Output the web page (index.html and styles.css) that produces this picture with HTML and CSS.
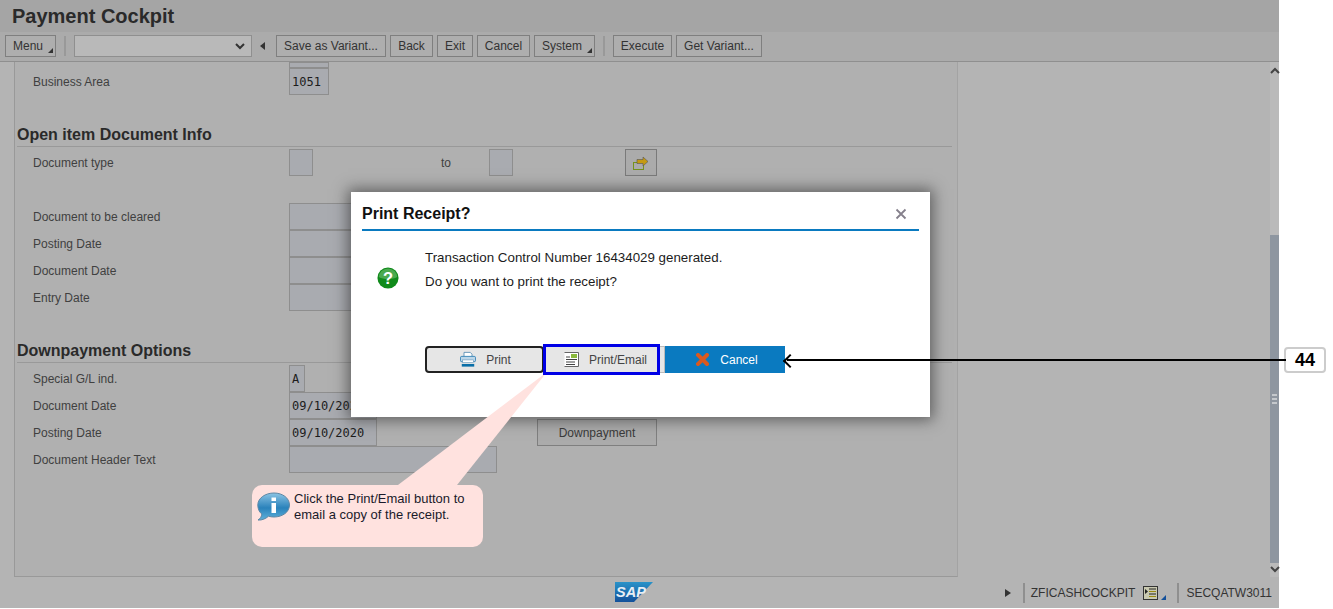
FILE: index.html
```html
<!DOCTYPE html>
<html lang="en">
<head>
	<meta charset="UTF-8">
	<title>Payment Cockpit</title>
	<link rel="stylesheet" href="styles.css">
</head>
<body>
	<div class="app">
		<div class="title_bar">Payment Cockpit</div>
		<div class="toolbar">
			<button type="button" class="tb_btn tb_menu">Menu</button>
			<span class="tb_sep"></span>
			<div class="tb_select">
				<svg width="10" height="7" viewBox="0 0 10 7"><path d="M1 1l4 4 4-4" fill="none" stroke="#333" stroke-width="2"/></svg>
			</div>
			<span class="tb_back"></span>
			<button type="button" class="tb_btn tb_save">Save as Variant...</button>
			<button type="button" class="tb_btn tb_b">Back</button>
			<button type="button" class="tb_btn tb_exit">Exit</button>
			<button type="button" class="tb_btn tb_cancel">Cancel</button>
			<button type="button" class="tb_btn tb_menu tb_system">System</button>
			<span class="tb_sep"></span>
			<button type="button" class="tb_btn tb_exec">Execute</button>
			<button type="button" class="tb_btn tb_get">Get Variant...</button>
		</div>

		<div class="content">
			<div class="panel">
				<div class="row row_sliver"><span class="lbl"></span><span class="field f40"></span></div>
				<div class="row"><span class="lbl">Business Area</span><span class="field f40">1051</span></div>

				<h2 class="section">Open item Document Info</h2>
				<div class="row">
					<span class="lbl">Document type</span>
					<span class="field f24"></span>
					<span class="to">to</span>
					<span class="field f24"></span>
					<button type="button" class="multi_btn">
						<svg width="18" height="16" viewBox="0 0 18 16"><rect x="1.5" y="7.5" width="10" height="7" fill="none" stroke="#76921c"/><path d="M5 4.500h6V2l5 4.500-5 4.500V8.500H5z" fill="#c59a12" stroke="#555" stroke-width=".6"/></svg>
					</button>
				</div>

				<div class="group">
					<div class="row"><span class="lbl">Document to be cleared</span><span class="field f88"></span></div>
					<div class="row"><span class="lbl">Posting Date</span><span class="field f88"></span></div>
					<div class="row"><span class="lbl">Document Date</span><span class="field f88"></span></div>
					<div class="row"><span class="lbl">Entry Date</span><span class="field f88"></span></div>
				</div>

				<h2 class="section">Downpayment Options</h2>
				<div class="row"><span class="lbl">Special G/L ind.</span><span class="field f16">A</span></div>
				<div class="row"><span class="lbl">Document Date</span><span class="field f88">09/10/2020</span></div>
				<div class="row">
					<span class="lbl">Posting Date</span><span class="field f88">09/10/2020</span>
					<button type="button" class="down_btn">Downpayment</button>
				</div>
				<div class="row"><span class="lbl">Document Header Text</span><span class="field f208"></span></div>
			</div>
			<div class="side"></div>
			<div class="scrollbar">
				<svg class="sb_arrow" width="10" height="7" viewBox="0 0 10 7"><path d="M1 6l4-4 4 4" fill="none" stroke="#444" stroke-width="2"/></svg>
				<div class="sb_track"></div>
				<div class="sb_thumb"><span class="grip"></span></div>
				<svg class="sb_arrow" width="10" height="7" viewBox="0 0 10 7"><path d="M1 1l4 4 4-4" fill="none" stroke="#444" stroke-width="2"/></svg>
			</div>
		</div>

		<div class="footer">
			<svg class="sap" width="38" height="20" viewBox="0 0 38 20">
				<defs><linearGradient id="sapg" x1="0" y1="0" x2="0" y2="1"><stop offset="0" stop-color="#2a93c9"/><stop offset="1" stop-color="#13509a"/></linearGradient></defs>
				<path d="M0 0h38L19 20H0z" fill="url(#sapg)"/>
				<text x="1" y="15" class="sap_text">SAP</text>
			</svg>
			<div class="status">
				<span class="play"></span>
				<span class="st_sep"></span>
				<span class="st_text">ZFICASHCOCKPIT</span>
				<svg class="st_icon" width="16" height="15" viewBox="0 0 16 15"><rect x=".5" y=".5" width="14" height="13" fill="#c9c9b0" stroke="#333"/><path d="M6 3h7M6 8h7" stroke="#222"/><path d="M6 5.500h7M6 10.500h7" stroke="#9a8a10"/><path d="M2 3l3 2.500L2 8z" fill="#222"/></svg>
				<span class="st_tri"></span>
				<span class="st_sep st_sep2"></span>
				<span class="st_text">SECQATW3011</span>
			</div>
		</div>
	</div>

	<!-- dialog and tutorial callouts sit on top of the page -->
	<div class="dialog">
		<div class="dlg_head">
			<span class="dlg_title">Print Receipt?</span>
			<svg width="12" height="12" viewBox="0 0 12 12"><path d="M1.500 1.500l9 9M10.500 1.500l-9 9" stroke="#85808c" stroke-width="1.800"/></svg>
		</div>
		<div class="dlg_body">
			<svg class="dlg_icon" width="22" height="22" viewBox="0 0 24 24">
				<circle cx="12" cy="12" r="11.500" fill="#0f8a1a"/>
				<path d="M2 11a10 9.500 0 0 1 20 0c-5 3-15 3-20 0z" fill="#4aa94f"/>
				<text x="12" y="18" class="q_mark">?</text>
			</svg>
			<div class="dlg_text">
				<p>Transaction Control Number 16434029 generated.</p>
				<p>Do you want to print the receipt?</p>
			</div>
		</div>
		<div class="dlg_btns">
			<button type="button" class="d_btn d_print">
				<svg width="16" height="17" viewBox="0 0 18 17"><path d="M4.500 5V.5h7l2 2V5" fill="#fff" stroke="#5b8fb5"/><rect x=".5" y="5" width="17" height="6" rx="1.500" fill="#bcd6e8" stroke="#2f7fb5"/><rect x="3" y="9" width="12" height="3" fill="#fff" stroke="#5b8fb5" stroke-width=".6"/><rect x="2" y="13.500" width="14" height="3" fill="#0a6fa8"/></svg>
				Print
			</button>
			<button type="button" class="d_btn d_email">
				<svg width="15" height="15" viewBox="0 0 15 15"><path d="M.5.500h14v14H.5z" fill="#fff"/><path d="M.5.500h14v14H.5" fill="none" stroke="#666"/><rect x="7" y="2" width="6" height="4" fill="#8ab93c"/><path d="M2 5h4M2 7.500h11M2 10h9M2 12.500h9" stroke="#444"/></svg>
				Print/Email
			</button>
			<button type="button" class="d_btn d_cancel">
				<svg width="13" height="13" viewBox="0 0 13 13"><path d="M2 2l9 9M11 2l-9 9" stroke="#d9591f" stroke-width="4" stroke-linecap="square"/></svg>
				Cancel
			</button>
		</div>
	</div>

	<svg class="wedge" width="150" height="113" viewBox="0 0 150 113"><path d="M149 0L0 113h59z" fill="#ffe2df"/></svg>
	<span class="hilite"></span>

	<div class="callout">
		<svg class="info" width="33" height="30" viewBox="0 0 33 30">
			<defs><linearGradient id="infog" x1="0" y1="0" x2="0" y2="1"><stop offset="0" stop-color="#8cc4e4"/><stop offset=".55" stop-color="#2a82bb"/><stop offset="1" stop-color="#5fb0da"/></linearGradient></defs>
			<path d="M17 1c8.500 0 15.500 5 15.500 12S25.500 25 17 25c-2 0-4-.3-5.500-.8C9 26.500 5 28.500 1 28c2.500-1.500 3.500-3.500 3.800-6C2 19.800.8 16.500.8 13 .8 6 8.500 1 17 1z" fill="url(#infog)" stroke="#5d87a5"/>
			<rect x="14.500" y="11" width="4.500" height="10" fill="#fff"/>
			<rect x="14.500" y="5.500" width="4.500" height="3.500" fill="#fff"/>
		</svg>
		<p>Click the Print/Email button to email a copy of the receipt.</p>
	</div>

	<div class="pointer">
		<span class="badge">44</span>
	</div>
</body>
</html>
```

FILE: styles.css
```css
*{
	margin: 0;
	padding: 0;
	box-sizing: border-box;
	font-family: "Liberation Sans", Arial, sans-serif;
}
body{
	background-color: #fff;
	width: 1333px;
	height: 609px;
	overflow: hidden;
	position: relative;
}
button{
	font-family: "Liberation Sans", Arial, sans-serif;
}
.app{
	width: 1279px;
	height: 608px;
	display: flex;
	flex-direction: column;
	background-color: #b4b4b4;
}

/* header */
.title_bar{
	height: 32px;
	padding: 4px 0 0 12px;
	background-color: #a5a5a5;
	color: #2a2a2a;
	font-size: 20px;
	font-weight: bold;
	line-height: 24px;
}
.toolbar{
	height: 30px;
	padding: 3px 0 0 5px;
	display: flex;
	align-items: flex-start;
	gap: 4px;
	background-color: #ababab;
	border-bottom: 1px solid #8f8f8f;
}
.tb_btn{
	height: 22px;
	background-color: #aeaeae;
	border: 1px solid #7f7f7f;
	color: #333;
	font-size: 12px;
	text-align: center;
	position: relative;
}
.tb_menu{
	width: 51px;
	text-align: left;
	padding-left: 7px;
}
.tb_menu::after{
	content: "";
	position: absolute;
	right: 2px;
	bottom: 3px;
	border-left: 5px solid transparent;
	border-bottom: 5px solid #333;
}
.tb_sep{
	width: 2px;
	height: 20px;
	margin: 1px 4px 0 4px;
	background-color: #999;
}
.tb_select{
	width: 178px;
	height: 22px;
	padding: 0 6px 0 0;
	display: flex;
	align-items: center;
	justify-content: flex-end;
	background-color: #b9b9b9;
	border: 1px solid #8f8f8f;
}
.tb_back{
	width: 0;
	height: 0;
	margin: 7px 7px 0 4px;
	border-top: 4px solid transparent;
	border-bottom: 4px solid transparent;
	border-right: 5px solid #333;
}
.tb_save{ width: 110px; }
.tb_b{ width: 43px; }
.tb_exit{ width: 36px; }
.tb_cancel{ width: 53px; }
.tb_system{ width: 61px; }
.tb_exec{ width: 59px; }
.tb_get{ width: 86px; }

/* main area */
.content{
	height: 515px;
	padding-left: 14px;
	display: flex;
	align-items: stretch;
}
.panel{
	width: 944px;
	height: 515px;
	padding-left: 2px;
	background-color: #b0b0b0;
	border-left: 1px solid #999;
	border-right: 1px solid #a3a3a3;
	border-bottom: 1px solid #999;
}
.side{
	width: 312px;
}
.row{
	height: 27px;
	display: flex;
	align-items: stretch;
	font-size: 12px;
	color: #404040;
}
.row_sliver{
	height: 6px;
}
.lbl{
	width: 272px;
	padding-left: 16px;
	line-height: 29px;
}
.field{
	background-color: #a9abb0;
	border: 1px solid #8e8e8e;
	color: #1c1c1c;
	font-family: "DejaVu Sans Mono", monospace;
	font-size: 12px;
	line-height: 27px;
	padding-left: 2px;
}
.f16{ width: 16px; }
.f24{ width: 24px; }
.f40{ width: 40px; }
.f88{ width: 88px; }
.f208{ width: 208px; }
.to{
	width: 48px;
	margin-left: 128px;
	line-height: 29px;
}
.multi_btn{
	width: 32px;
	height: 27px;
	margin-left: 112px;
	background-color: #ababab;
	border: 1px solid #7a7a7a;
	display: flex;
	align-items: center;
	justify-content: center;
}
.down_btn{
	width: 120px;
	height: 27px;
	margin-left: 160px;
	background-color: #ababab;
	border: 1px solid #7f7f7f;
	color: #3a3a3a;
	font-size: 12px;
}
.section{
	height: 27px;
	margin: 25px 5px 2px 0;
	padding-top: 5px;
	color: #2a2a2a;
	font-size: 16px;
	line-height: 20px;
	border-bottom: 1px solid #999;
}
.group{
	margin-top: 27px;
}

/* scrollbar */
.scrollbar{
	width: 9px;
	display: flex;
	flex-direction: column;
	position: relative;
	background-color: #bababa;
}
.sb_arrow{
	flex: none;
	margin-top: 5px;
}
.sb_arrow:last-child{
	position: absolute;
	left: 0;
	bottom: 4px;
	margin: 0;
}
.sb_track{
	height: 161px;
}
.sb_thumb{
	height: 328px;
	display: flex;
	align-items: center;
	justify-content: center;
	background-color: #8e96a0;
}
.grip{
	width: 5px;
	height: 10px;
	background: repeating-linear-gradient(#c4c8cc 0 2px, transparent 2px 4px);
}

/* footer */
.footer{
	height: 31px;
	padding: 5px 7px 0 615px;
	display: flex;
	align-items: flex-start;
	justify-content: space-between;
}
.sap_text{
	fill: #e8eef4;
	font-size: 14.500px;
	font-weight: bold;
	font-style: italic;
}
.status{
	display: flex;
	align-items: center;
	height: 20px;
	margin-top: 1px;
	font-size: 12px;
	color: #333;
}
.play{
	width: 0;
	height: 0;
	margin-right: 12px;
	border-top: 4px solid transparent;
	border-bottom: 4px solid transparent;
	border-left: 6px solid #333;
}
.st_sep{
	width: 2px;
	height: 20px;
	margin-right: 6px;
	background-color: #8f8f8f;
}
.st_sep2{
	margin-left: 11px;
	margin-right: 7px;
}
.st_icon{
	margin-left: 8px;
}
.st_tri{
	margin: 9px 0 0 2px;
	border-left: 5px solid transparent;
	border-bottom: 5px solid #13509a;
}

/* dialog */
.dialog{
	position: absolute;
	left: 351px;
	top: 192px;
	width: 579px;
	height: 225px;
	padding: 0 11px;
	background-color: #fff;
	box-shadow: 0 0 14px 3px rgba(40, 40, 40, 0.6);
}
.dlg_head{
	height: 39px;
	padding: 6px 12px 0 0;
	display: flex;
	align-items: center;
	justify-content: space-between;
	border-bottom: 2px solid #0a7ac0;
}
.dlg_title{
	color: #111;
	font-size: 16px;
	font-weight: bold;
}
.dlg_body{
	height: 115px;
	padding: 36px 0 0 15px;
	display: flex;
	align-items: flex-start;
}
.dlg_icon{
	flex: none;
	margin-right: 26px;
}
.q_mark{
	fill: #fff;
	font-size: 18px;
	font-weight: bold;
	text-anchor: middle;
}
.dlg_text{
	margin-top: -21px;
	color: #1c1c1c;
	font-size: 13.33px;
	line-height: 24px;
}
.dlg_btns{
	display: flex;
	margin-left: 63px;
}
.d_btn{
	height: 27px;
	display: flex;
	align-items: center;
	justify-content: center;
	gap: 10px;
	font-size: 12px;
	color: #444;
	background-color: #e6e6e6;
}
.d_print{
	width: 119px;
	padding-left: 2px;
	border: 2px solid #222;
	border-radius: 4px;
}
.d_email{
	width: 121px;
	padding-left: 2px;
	border: 1px solid #bbb;
}
.d_cancel{
	width: 120px;
	padding-left: 4px;
	gap: 11px;
	color: #fff;
	background-color: #0a7ac0;
	border: 0;
}

/* tutorial callout */
.wedge{
	position: absolute;
	left: 398px;
	top: 372px;
}
.hilite{
	position: absolute;
	left: 543px;
	top: 344px;
	width: 117px;
	height: 31px;
	border: 3px solid #0000e6;
}
.callout{
	position: absolute;
	left: 252px;
	top: 485px;
	width: 231px;
	height: 62px;
	padding: 6px 10px 0 42px;
	background-color: #ffe2df;
	border-radius: 10px;
	color: #1a1a2a;
	font-size: 13px;
	line-height: 16px;
}
.info{
	position: absolute;
	left: 5px;
	top: 7px;
}
.pointer{
	position: absolute;
	left: 785px;
	top: 347px;
	width: 541px;
	height: 26px;
	display: flex;
	justify-content: flex-end;
}
.pointer::before{
	content: "";
	position: absolute;
	left: 2px;
	right: 40px;
	top: 12px;
	height: 2px;
	background-color: #000;
}
.pointer::after{
	content: "";
	position: absolute;
	left: 0;
	top: 9px;
	width: 8px;
	height: 8px;
	border-left: 2px solid #000;
	border-bottom: 2px solid #000;
	transform: rotate(45deg);
}
.badge{
	width: 42px;
	height: 26px;
	background-color: #fff;
	border: 2px solid #ccc;
	border-radius: 4px;
	color: #000;
	font-size: 18px;
	font-weight: bold;
	line-height: 22px;
	text-align: center;
}
```
